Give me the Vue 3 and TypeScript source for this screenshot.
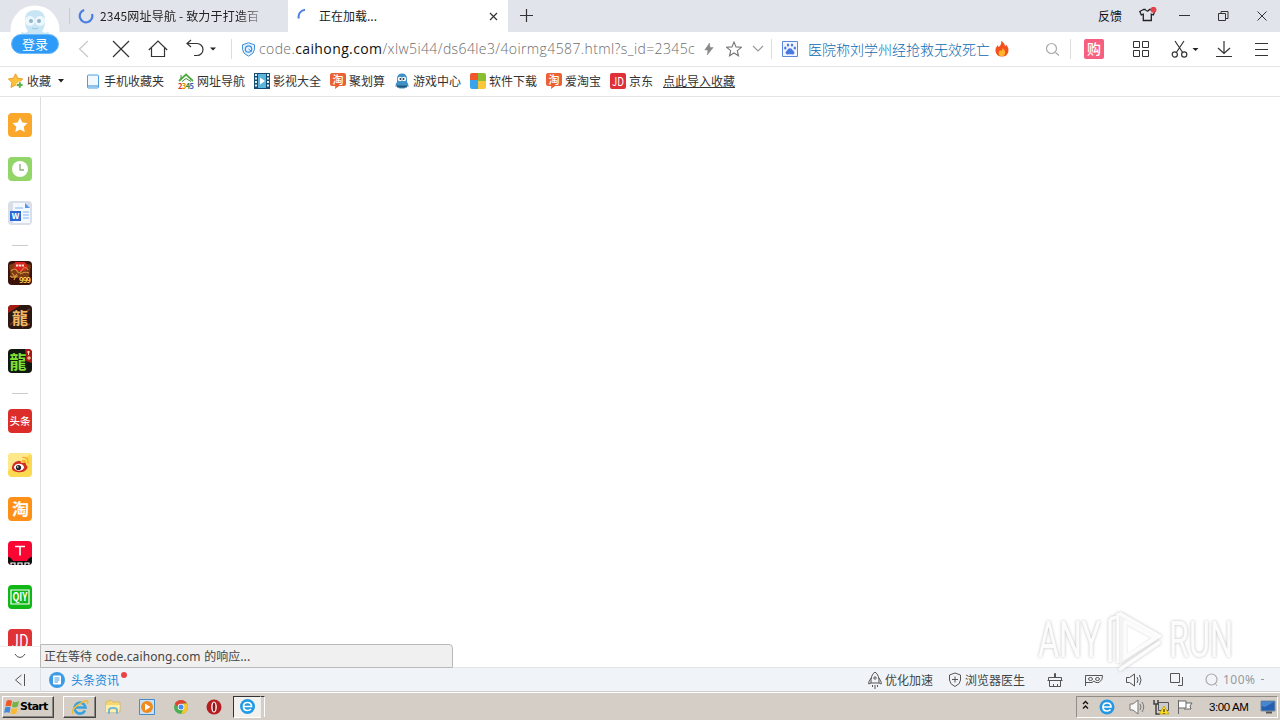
<script setup lang="ts">
interface Bookmark {
  id: string
  label: string
  width: number
}

const bookmarks: Bookmark[] = [
  { id: 'phone', label: '手机收藏夹', width: 93 },
  { id: 'house', label: '网址导航', width: 76 },
  { id: 'film', label: '影视大全', width: 76 },
  { id: 'tao', label: '聚划算', width: 64 },
  { id: 'game', label: '游戏中心', width: 76 },
  { id: 'soft', label: '软件下载', width: 76 },
  { id: 'tao', label: '爱淘宝', width: 64 },
  { id: 'jd', label: '京东', width: 53 },
]

const sideGroups: string[][] = [
  ['star', 'clock', 'word'],
  ['g999', 'dragon1', 'dragon2'],
  ['toutiao', 'weibo', 'taobao', 'tmall', 'qiyi', 'jd'],
]
</script>

<template>
  <div class="screen">
    <header class="tabs">
      <div class="tab idle">
        <svg class="spin" width="16" height="16" viewBox="0 0 16 16"><path d="M6.2 2A6.3 6.3 0 1 0 14 6" fill="none" stroke="#4a7fe0" stroke-width="2.2" /></svg>
        <span class="tab-title faded">2345网址导航 - 致力于打造百</span>
      </div>
      <div class="tab active">
        <svg class="spin" width="16" height="16" viewBox="0 0 16 16"><path d="M1.8 10.5C.8 6 3.400 2.500 8 1.800" fill="none" stroke="#4a7fe0" stroke-width="2" /></svg>
        <span class="tab-title">正在加载...</span>
        <svg class="tab-close" width="9" height="9" viewBox="0 0 9 9"><path d="M1 1l7 7M8 1L1 8" stroke="#333" stroke-width="1.2" /></svg>
      </div>
      <svg class="plus" width="13" height="13" viewBox="0 0 13 13"><path d="M6.500 0v13M0 6.500h13" stroke="#333" stroke-width="1.200" /></svg>
      <div class="window-tools">
        <span class="feedback">反馈</span>
        <svg width="18" height="16" viewBox="0 0 18 16"><path d="M4.500 2.500L.8 4.500l1.500 3.400 2-.7V13.500h8V7.200l2 .7 1.400-3.400-3.400-2H10.500Q8.300 5.500 6.200 2.500z" fill="none" stroke="#222" stroke-width="1.300" /><circle cx="14.500" cy="2.800" r="3" fill="#e6424b" /></svg>
        <svg width="12" height="12" viewBox="0 0 12 12"><path d="M0 5.500h11" stroke="#333" /></svg>
        <svg width="11" height="12" viewBox="0 0 11 12"><path d="M.5 3.500h7v7h-7zM3 3.500v-2h7v7H7.500" fill="none" stroke="#333" /></svg>
        <svg width="10" height="12" viewBox="0 0 10 12"><path d="M.5 1.500l9 9M9.500 1.500l-9 9" stroke="#333" /></svg>
      </div>
    </header>

    <div class="login">
      <svg width="50" height="50" viewBox="0 0 50 50">
        <circle cx="25" cy="26" r="24.500" fill="#fff" />
        <path d="M15 16Q15 6 25 6t10 10q0 8-3 11 1 3 7 1-1 6-7 4v3H18v-3q-6 2-7-4 6 2 7-1-3-3-3-11z" fill="#c7e5f5" />
        <circle cx="20" cy="17" r="5" fill="#eef8fc" /><circle cx="30" cy="17" r="5" fill="#eef8fc" />
        <circle cx="21" cy="17" r="2" fill="#8fb5cb" /><circle cx="29" cy="17" r="2" fill="#8fb5cb" />
        <path d="M22 24q3 2 6 0" stroke="#9cc5da" fill="none" />
      </svg>
      <span>登录</span>
    </div>

    <nav class="navbar">
      <div class="nav-btn"><svg width="20" height="20" viewBox="0 0 20 20"><path d="M14 2L5.500 10l8.500 8" fill="none" stroke="#c8c8c8" stroke-width="1.200" /></svg></div>
      <div class="nav-btn"><svg width="20" height="20" viewBox="0 0 20 20"><path d="M2 2l16 16M18 2L2 18" stroke="#333" stroke-width="1.200" /></svg></div>
      <div class="nav-btn"><svg width="20" height="20" viewBox="0 0 20 20"><path d="M.8 11L10 2l9.200 9M3.500 9v8.500h13V9" fill="none" stroke="#333" stroke-width="1.200" /></svg></div>
      <div class="nav-btn undo"><svg width="32" height="20" viewBox="0 0 32 20"><path d="M5 1L1 4.500 5 8M1.500 4.500H11a6 6 0 0 1 0 12H8" fill="none" stroke="#333" stroke-width="1.200" /><path d="M24 8.500h6l-3 3z" fill="#222" /></svg></div>
      <i class="bar"></i>
      <div class="address">
        <svg width="15" height="15" viewBox="0 0 15 15"><path d="M7.500.8l6 2v4.400q0 4.300-6 7-6-2.700-6-7V2.800z" fill="#e3f1fc" stroke="#3d91dc" /><circle cx="7.500" cy="7" r="3.200" fill="none" stroke="#3d91dc" stroke-width="1.200" /><path d="M7.500 7l3 2.500" stroke="#3d91dc" /></svg>
        <span class="url">code.<b>caihong.com</b>/xlw5i44/ds64le3/4oirmg4587.html?s_id=2345c</span>
        <svg class="bolt" width="10" height="14" viewBox="0 0 10 14"><path d="M5.500 1L.8 8H4l-.8 5L9.200 5.500H6z" fill="#888" stroke="#888" stroke-width=".5" /></svg>
        <svg class="fav" width="16" height="16" viewBox="0 0 16 16"><path d="M8 1l2 4.900 5.300.4-4 3.400 1.200 5.100L8 12l-4.500 2.800 1.200-5.100-4-3.400L6 5.900z" fill="none" stroke="#777" stroke-width="1.100" /></svg>
        <svg class="drop" width="12" height="8" viewBox="0 0 12 8"><path d="M1 1l5 5 5-5" fill="none" stroke="#999" stroke-width="1.200" /></svg>
      </div>
      <i class="bar"></i>
      <div class="search">
        <svg width="16" height="16" viewBox="0 0 16 16"><path d="M.5.500h15v15H.5z" fill="#f1f5fe" stroke="#5e86dc" /><path d="M8 7.300c2 0 2.500 2 4 3.200 1 1.500 0 3-1.700 2.900-1.500-.2-3-.2-4.600 0C4 13.500 3 12 4 10.500 5.500 9.300 6 7.300 8 7.300z" fill="#4b79df" /><g fill="#4b79df"><ellipse cx="3.300" cy="7" rx="1.200" ry="1.500" /><ellipse cx="6" cy="4" rx="1.200" ry="1.600" /><ellipse cx="10" cy="4" rx="1.200" ry="1.600" /><ellipse cx="12.800" cy="7" rx="1.200" ry="1.500" /></g></svg>
        <span class="hot">医院称刘学州经抢救无效死亡</span>
        <svg class="fire" width="14" height="16" viewBox="0 0 14 16"><path d="M6 0q4 2 4 5.500l1.300-1.700Q14 7 13.500 10q-.8 5.500-6.500 5.500T.4 10Q.2 6.500 3 4l.3 2Q7 4 6 0z" fill="#f4511f" /><path d="M7.500 7q3.500 3 2.500 6-1 2.200-3.300 2.200Q3.500 15 3.700 12q.1-2 1.600-3l.7 1.200Q8 9 7.500 7z" fill="#ffb62a" /></svg>
        <svg class="lens" width="15" height="15" viewBox="0 0 15 15"><circle cx="6.500" cy="6.500" r="5" fill="none" stroke="#aaa" stroke-width="1.200" /><path d="M10.500 10.500l3.500 3" stroke="#aaa" stroke-width="1.200" /></svg>
      </div>
      <i class="bar"></i>
      <div class="tools">
        <span class="buy">购</span>
        <svg class="apps" width="18" height="18" viewBox="0 0 18 18"><path d="M1.500 1.500h6v6h-6zM10.500 1.500h6v6h-6zM1.500 10.500h6v6h-6zM10.500 10.500h6v6h-6z" fill="none" stroke="#333" /></svg>
        <svg class="cut" width="28" height="18" viewBox="0 0 28 18"><path d="M4 1l8 12M13 1L5 13" stroke="#333" stroke-width="1.200" /><g fill="none" stroke="#333" stroke-width="1.200"><circle cx="3.800" cy="14.500" r="2.600" /><circle cx="13.200" cy="14.500" r="2.600" /></g><path d="M21.500 8h6l-3 3z" fill="#222" /></svg>
        <svg class="down" width="18" height="18" viewBox="0 0 18 18"><path d="M9 1v12M3 8l6 5.500L15 8M1 16.500h16" fill="none" stroke="#333" stroke-width="1.200" /></svg>
        <svg class="menu" width="14" height="14" viewBox="0 0 14 14"><path d="M0 1.500h13M0 7.500h13M0 13.500h13" stroke="#333" /></svg>
      </div>
    </nav>

    <div class="bookmarks">
      <div class="favorites">
        <svg width="16" height="16" viewBox="0 0 16 16"><path d="M7.500.8l2.200 4.400 5 .7-3.500 3.500.9 5-4.600-2.300-4.500 2.300.9-5L.4 5.900l5-.7z" fill="#fcc13b" stroke="#ed9d29" /><path d="M8.500 12H15M11.800 8.800v6.400" stroke="#fff" stroke-width="3.500" /><path d="M9 12h5.500M11.800 9.300v5.400" stroke="#54b54c" stroke-width="2" /></svg>
        <span>收藏</span>
        <svg class="caret" width="6" height="4" viewBox="0 0 6 4"><path d="M0 0h6L3 3.500z" fill="#222" /></svg>
      </div>
      <div v-for="(item, index) in bookmarks" :key="index" class="bookmark" :style="{ width: item.width + 'px' }">
        <svg width="16" height="16" viewBox="0 0 16 16">
          <g v-if="item.id === 'phone'"><rect x="2.500" y="2" width="11" height="13" rx="1" fill="#f1f9ff" stroke="#4f9dda" /><path d="M3 12h10v2.500H3z" fill="#8dc1eb" /></g>
          <g v-else-if="item.id === 'house'"><path d="M1 8l7-6.500L15 8" fill="none" stroke="#52a942" stroke-width="1.800" /><path d="M3 2v4M4 8.500l4-3 5 3" fill="none" stroke="#3e8f3c" /><text x="0" y="15.500" font-size="7.500" font-weight="700" textLength="16"><tspan fill="#d33">2</tspan><tspan fill="#e58b00">3</tspan><tspan fill="#238b3c">4</tspan><tspan fill="#285ec4">5</tspan></text></g>
          <g v-else-if="item.id === 'film'"><path d="M0 0h16v16H0z" fill="#164c72" /><path d="M4 1h8v14H4z" fill="#59b5dc" /><path d="M2 1v14M14 1v14" stroke="#fff" stroke-width="1.800" stroke-dasharray="2 1.500" /><path d="M6 4.500l5 3.500-5 3.500z" fill="#fff" /></g>
          <g v-else-if="item.id === 'tao'"><path d="M2 0h12q2 0 2 2v9q0 2-2 2H9l-4 3 .3-3H2q-2 0-2-2V2q0-2 2-2z" fill="#eb6136" /><text x="2.500" y="10.700" fill="#fff" font-size="11" font-weight="500">淘</text></g>
          <g v-else-if="item.id === 'game'"><path d="M3 6q0-5.500 5-5.500T13 6v3q2 2 1.500 5l-2-1-2 2.500h-5l-2-2.500-2 1Q1 11 3 9z" fill="#3e91c4" /><circle cx="6" cy="6" r="2.200" fill="#fff" /><circle cx="10" cy="6" r="2.200" fill="#fff" /><circle cx="6.500" cy="6" r="1" fill="#234" /><circle cx="9.500" cy="6" r="1" fill="#234" /><path d="M3 13.500h10" stroke="#275776" stroke-width="2" /></g>
          <g v-else-if="item.id === 'soft'"><rect width="16" height="16" rx="2" fill="#fff" /><path d="M0 2q0-2 2-2h6v7H0z" fill="#f1572c" /><path d="M8 0h6q2 0 2 2v6H8z" fill="#88bf31" /><path d="M0 7h8v9H2q-2 0-2-2z" fill="#39a3eb" /><path d="M8 8h8v6q0 2-2 2H8z" fill="#fbc73a" /></g>
          <g v-else><rect width="16" height="16" rx="2" fill="#df3038" /><text x="2" y="12.500" fill="#fff" font-size="12" textLength="12" lengthAdjust="spacingAndGlyphs">JD</text></g>
        </svg>
        <span>{{ item.label }}</span>
      </div>
      <span class="import">点此导入收藏</span>
    </div>

    <main class="content">
      <aside class="sidebar">
        <div class="side-list">
          <template v-for="(group, g) in sideGroups" :key="g">
            <hr v-if="g > 0">
            <svg v-for="name in group" :key="name" class="side-icon" width="24" height="24" viewBox="0 0 24 24">
              <g v-if="name === 'star'"><path d="M0 0h24v24H0z" fill="#faa72b" /><path d="M12 4.500l2.300 4.900 5.300.7-3.900 3.700 1 5.300-4.700-2.600L7.300 19l1-5.300-3.900-3.600 5.300-.7z" fill="#fff" /></g>
              <g v-else-if="name === 'clock'"><path d="M0 0h24v24H0z" fill="#92d569" /><circle cx="12" cy="12" r="8" fill="#fff" /><path d="M12 7v6h4" fill="none" stroke="#8aae7c" stroke-width="1.300" /></g>
              <g v-else-if="name === 'word'"><path d="M0 0h24v24H0z" fill="#d9dee8" /><path d="M5 2h12l5 5v15H5z" fill="#f4f8ff" /><path d="M17 2v5h5z" fill="#5b93e7" /><path d="M7 7h8M15 11h6M15 14h6M15 17h6" stroke="#a8cafa" stroke-width="1.300" /><path d="M2 10h11v10H2z" fill="#2c68d4" /><text x="3.500" y="18" fill="#fff" font-size="10" font-weight="700" textLength="8" lengthAdjust="spacingAndGlyphs">w</text></g>
              <g v-else-if="name === 'g999'"><path d="M0 0h24v24H0z" fill="#3b1209" /><path d="M1 4q9-5 22 0l-2 13H3z" fill="#7a3b16" /><path d="M7 1h10l3 5-3 4H9L6 7z" fill="#d8231e" /><path d="M8 4.500h8" stroke="#ffe0cc" stroke-width="2" stroke-dasharray="2.300 .6" /><path d="M3 10q4-4 6 0t5-1 6 0M2 15q4 3 7-2M6 19q1-4 4-4M4 12l4 5M12 13q5-3 9-1" fill="none" stroke="#d9933b" stroke-width="1.100" /><text x="11" y="22" fill="#ffd34f" font-size="8" font-weight="700" textLength="12">999</text></g>
              <g v-else-if="name === 'dragon1'"><path d="M0 0h24v24H0z" fill="#2a1712" /><path d="M0 0h13L0 8z" fill="#a31c12" /><path d="M2 20q8-9 20-16M14 22l8-3" stroke="#6f351c" fill="none" stroke-width="1.500" /><text x="4" y="18.500" fill="#f6b764" font-size="16" font-weight="700">龍</text></g>
              <g v-else-if="name === 'dragon2'"><path d="M0 0h24v24H0z" fill="#12170f" /><path d="M17 0h7v14l-6-2z" fill="#a91a19" /><text x="1.500" y="20" fill="#80df32" font-size="18" font-weight="700" textLength="17" lengthAdjust="spacingAndGlyphs">龍</text><path d="M19 3h3M20.500 2v4M19 9h4M21 7v4" stroke="#ffe2bc" /></g>
              <g v-else-if="name === 'toutiao'"><path d="M0 0h24v24H0z" fill="#dc2d2a" /><text x="1.500" y="15.500" fill="#fff" font-size="10.500" font-weight="500" textLength="21">头条</text></g>
              <g v-else-if="name === 'weibo'"><path d="M0 0h24v24H0z" fill="#fbd951" /><path d="M0 0h24L0 18z" fill="#fde98b" /><path d="M14 8q3-1 3 2" stroke="#f19a24" fill="none" stroke-width="1.200" /><path d="M14 4.500q7-1 6 6" stroke="#f4ac33" fill="none" stroke-width="1.200" /><path d="M4 14q1-5 6-6 3-1 3 2 6-1 5 2 3 2 0 5-3 3-9 2-6-1-5-5z" fill="#d42b22" /><ellipse cx="11" cy="14.300" rx="5" ry="3.500" fill="#fff" /><circle cx="10.500" cy="14.500" r="2.600" fill="#252429" /><circle cx="9.800" cy="14" r=".8" fill="#fff" /></g>
              <g v-else-if="name === 'taobao'"><path d="M0 0h24v24H0z" fill="#ff9017" /><text x="4" y="17.500" fill="#fff" font-size="16" font-weight="700" textLength="17" lengthAdjust="spacingAndGlyphs">淘</text></g>
              <g v-else-if="name === 'tmall'"><path d="M0 0h24v24H0z" fill="#fa0632" /><path d="M7 5.500h10M12 5v9.500" stroke="#fff" stroke-width="1.700" /><path d="M0 16q3 0 5 4h14q2-4 5-4v8H0z" fill="#111" /><path d="M3 24v-2h4v2M10 24v-2h4v2M17 24v-2h4v2" fill="none" stroke="#fff" stroke-width="1.200" /></g>
              <g v-else-if="name === 'qiyi'"><path d="M0 0h24v24H0z" fill="#10b717" /><path d="M3 7V5h18v2M3 17v2h18v-2M3 7v10M21 7v10" fill="none" stroke="#fff" stroke-width="1.200" /><text x="4.500" y="16" fill="#fff" font-size="11" font-weight="700" textLength="15" lengthAdjust="spacingAndGlyphs">QIY</text></g>
              <g v-else><path d="M0 0h24v24H0z" fill="#df3338" /><text x="3.500" y="19" fill="#fff" font-size="18" textLength="17" lengthAdjust="spacingAndGlyphs">JD</text></g>
            </svg>
          </template>
        </div>
        <div class="side-more"><svg width="12" height="7" viewBox="0 0 12 7"><path d="M1 1q2 3.500 5 3.500T11 1" fill="none" stroke="#555" /></svg></div>
      </aside>
      <div class="page"></div>
      <div class="loading">正在等待 <span>code.caihong.com</span> 的响应...</div>
    </main>

    <div class="status">
      <div class="collapse"><svg width="12" height="12" viewBox="0 0 12 12"><path d="M7.500 1L1.500 6l6 5M10.500 0v12" fill="none" stroke="#555" /></svg></div>
      <svg class="news-icon" width="16" height="16" viewBox="0 0 16 16"><circle cx="8" cy="8" r="8" fill="#3c9be4" /><rect x="4" y="3.500" width="8" height="9" rx="1" fill="#fff" /><path d="M5.500 6h5M5.500 8h5M5.500 10h3.500" stroke="#3c9be4" /></svg>
      <span class="news">头条资讯</span><i class="red-dot"></i>
      <div class="status-tools">
        <svg class="rocket" width="14" height="18" viewBox="0 0 14 18"><path d="M7 1Q2.500 4 3 12h8Q11.500 4 7 1zM3 7L.8 11v2L3 12M11 7l2.200 4v2L11 12" fill="none" stroke="#555" /><circle cx="7" cy="7" r="1.200" fill="none" stroke="#555" /><path d="M4.500 14v2M7 14v4M9.500 14v2" stroke="#555" /></svg>
        <span>优化加速</span>
        <svg class="doctor" width="14" height="16" viewBox="0 0 14 16"><path d="M7 1l5.500 2v5q0 4-5.500 6.500Q1.500 12 1.500 8V3zM4 7.500h6M7 4.500v6" fill="none" stroke="#555" /></svg>
        <span>浏览器医生</span>
        <svg class="broom" width="16" height="16" viewBox="0 0 16 16"><path d="M7.500 5.500V1.500h1v4M1.500 9V5.500h13V9M.5 8.500h15M2.500 8.500v6h11v-6M6.500 14v-2M10.500 14v-2" fill="none" stroke="#555" /></svg>
        <svg class="mask" width="18" height="12" viewBox="0 0 18 12"><path d="M.5 12V1.500h17Q18 6 14 8.500h-3L9 7 7 8.500H1" fill="none" stroke="#555" /><ellipse cx="5.500" cy="5" rx="2" ry="1.500" fill="none" stroke="#555" /><ellipse cx="12.500" cy="5" rx="2" ry="1.500" fill="none" stroke="#555" /></svg>
        <svg class="sound" width="16" height="14" viewBox="0 0 16 14"><path d="M.5 4.500h3l5-3.500v12l-5-3.500h-3zM11 4q2 3 0 6M13.500 2q3 5 0 10" fill="none" stroke="#555" /></svg>
        <svg class="windows" width="13" height="13" viewBox="0 0 13 13"><path d="M.5.500h9v9h-9zM12.500 4v8.500H8" fill="none" stroke="#555" /></svg>
        <svg class="zoom" width="14" height="14" viewBox="0 0 14 14"><circle cx="6.500" cy="6.500" r="5.500" fill="none" stroke="#aaa" stroke-width="1.200" /><path d="M10 10l2 3" stroke="#aaa" /></svg>
        <span class="percent">100%</span><i class="dash"></i>
      </div>
    </div>

    <footer class="taskbar">
      <div class="start"><svg width="16" height="16" viewBox="0 0 16 16"><path d="M2.500 2Q5 0 8 2L6.800 7.500q-3-1.500-5.300 0z" fill="#ee5529" /><path d="M9 2.500q3 1.500 6-.5L13.800 7.500q-3 1.800-6 .3z" fill="#73b444" /><path d="M1.300 8.500q2.500-1.700 5.300 0L5.400 14Q3 12.500 0 14z" fill="#4089dc" /><path d="M7.500 9q3 1.500 6 0l-1.200 5.500q-3 1.600-6 0z" fill="#f9ba32" /></svg><b>Start</b></div>
      <div class="task ie-one"><svg width="18" height="18" viewBox="0 0 18 18"><path d="M14 12.500A5.500 5.500 0 1 1 14.500 9.500H5" fill="none" stroke="#35a3e1" stroke-width="2.600" /><path d="M2 16Q-1 10 15 2.500q3 0 1 3.500" fill="none" stroke="#f0bb34" stroke-width="1.500" /></svg></div>
      <svg class="explorer" width="16" height="16" viewBox="0 0 16 16"><path d="M1 3l5-2 2 2h7v10H1z" fill="#f5d675" stroke="#cdab4c" stroke-width=".6" /><path d="M1 6h14l-1 7H1z" fill="#fff0a7" /><path d="M4 15v-4q0-2 4-2t4 2v4" fill="none" stroke="#73b7d8" stroke-width="2" /></svg>
      <svg class="wmp" width="16" height="16" viewBox="0 0 16 16"><path d="M.5.500h15v15H.5z" fill="#c7e2f7" stroke="#478cc7" /><circle cx="8" cy="8" r="6" fill="#f18a1c" /><path d="M6 4.500l5.500 3.500L6 11.500z" fill="#fff" /></svg>
      <svg class="chrome" width="14" height="14" viewBox="0 0 14 14"><circle cx="7" cy="7" r="7" fill="#4baf50" /><path d="M1 3.500a7 7 0 0 1 12 0H7L4 8z" fill="#e34133" /><path d="M7 14l3-6-1-4.500h4A7 7 0 0 1 7 14z" fill="#f8c72d" /><circle cx="7" cy="7" r="3.300" fill="#fff" /><circle cx="7" cy="7" r="2.500" fill="#438cf0" /></svg>
      <svg class="opera" width="16" height="16" viewBox="0 0 16 16"><circle cx="8" cy="8" r="7.500" fill="#b51d20" /><ellipse cx="8" cy="8" rx="2.800" ry="5.500" fill="#fff" /><ellipse cx="8" cy="8" rx="1.400" ry="4.500" fill="#8c1518" /></svg>
      <div class="task ie-two"><svg width="15" height="15" viewBox="0 0 15 15"><circle cx="7.500" cy="7.500" r="7.500" fill="#219be7" /><path d="M3.500 7.500h8q0-4-4-4t-4 4 4 4q2.200 0 3.500-1.500" fill="none" stroke="#fff" stroke-width="1.700" /></svg></div>
      <i class="task-end"></i>
      <div class="tray">
        <svg class="more" width="7" height="10" viewBox="0 0 7 10"><path d="M1 4l2.500-2.500L6 4M1 8.500L3.500 6 6 8.500" fill="none" stroke="#111" stroke-width="1.300" /></svg>
        <svg class="tray-ie" width="16" height="16" viewBox="0 0 16 16"><circle cx="8" cy="8" r="7.500" fill="#2498e3" /><path d="M4 8h8q0-4-4-4T4 8t4 4q2.200 0 3.500-1.500" fill="none" stroke="#fff" stroke-width="1.700" /></svg>
        <svg class="tray-sound" width="17" height="16" viewBox="0 0 17 16"><path d="M1 5h3l5-4v14l-5-4H1z" fill="#f8f8f8" stroke="#777" /><path d="M11 5q2 3 0 6M13 3q3.500 5 0 10" fill="none" stroke="#777" /></svg>
        <svg class="net" width="17" height="16" viewBox="0 0 17 16"><path d="M5.500 3.500h10v8h-10z" fill="#ccc" stroke="#555" /><path d="M1 1v4h4V1M3 5v10h4" fill="none" stroke="#444" stroke-width="1.500" /><path d="M11 7l5 8H6z" fill="#ffdf22" stroke="#b79400" stroke-width=".7" /><path d="M11 10v3M11 14v1" stroke="#333" stroke-width="1.200" /></svg>
        <svg class="flag" width="16" height="16" viewBox="0 0 16 16"><path d="M1.500 15V1M2 2h7v7H2M9 4h6l-2 3 1 3H7" fill="#fff" stroke="#666" /></svg>
        <span>3:00 AM</span>
        <svg class="desktop" width="16" height="14" viewBox="0 0 16 14"><path d="M1 1h14v10H1z" fill="#245fb1" stroke="#76909f" /><path d="M1.500 1.500h13L5 7 1.500 6z" fill="#4a86cd" /><path d="M6 12.500h6" stroke="#555" stroke-width="2" /></svg>
      </div>
    </footer>

    <svg class="watermark" width="204" height="74" viewBox="0 0 204 74">
      <g fill="#fcfcfc" font-size="50">
        <text x="4" y="53" textLength="63" lengthAdjust="spacingAndGlyphs">ANY</text>
        <text x="135" y="53" textLength="64" lengthAdjust="spacingAndGlyphs">RUN</text>
      </g>
      <path d="M86 8L128 32 86 60z" fill="#f1f1f1" />
      <path d="M94 23l21 11-21 15z" fill="#fff" />
      <path d="M84 9v50M85 9l42 24M91 17v36l34-21M91 17l32 18M76 15v43M76 15l7-2M85 66l41-28" fill="none" stroke="#fcfcfc" stroke-width="3.500" />
    </svg>
  </div>
</template>

<style>
html, body { margin: 0; overflow: hidden; }
</style>

<style scoped>
.screen { position: relative; width: 1280px; height: 720px; overflow: hidden; display: flex; flex-direction: column; background: #fff; color: #333; font: 12px/16px "Noto Sans CJK SC", sans-serif; }
svg { display: block; flex: none; }
i { display: block; flex: none; }
span { white-space: nowrap; }
.tabs { height: 32px; flex: none; display: flex; align-items: center; background: #e1e4eb; color: #222; }
.tab { display: flex; align-items: center; height: 32px; box-sizing: border-box; }
.idle { width: 219px; margin-left: 69px; padding-left: 9px; position: relative; }
.idle::before { content: ""; position: absolute; left: 0; top: 8px; width: 1px; height: 16px; background: #c9ccd3; }
.active { width: 220px; background: #fff; padding-left: 9px; }
.spin { margin-right: 6px; }
.tab-title { height: 16px; }
.faded { width: 160px; overflow: hidden; letter-spacing: .18px; mask-image: linear-gradient(90deg, #000 140px, transparent 170px); }
.tab-close { margin-left: auto; margin-right: 10px; }
.plus { margin-left: 12px; margin-bottom: 2px; }
.window-tools { margin-left: auto; display: flex; align-items: center; padding-right: 13px; }
.feedback { margin-right: 17px; color: #111; }
.window-tools svg:nth-of-type(1) { margin-right: 22px; margin-bottom: 2px; }
.window-tools svg:nth-of-type(2) { margin-right: 27px; }
.window-tools svg:nth-of-type(3) { margin-right: 28px; }
.window-tools svg:nth-of-type(n+2) { margin-bottom: 1px; }
.login { position: absolute; z-index: 3; left: 10px; top: 4px; width: 50px; height: 50px; display: flex; justify-content: center; align-items: flex-end; }
.login svg { position: absolute; left: 0; top: 0; }
.login span { position: relative; width: 46px; height: 18px; line-height: 17px; border: 1px solid #72baf7; border-radius: 10px; background: #2d9bf7; color: #fff; text-align: center; font-size: 13px; }
.navbar { height: 34px; flex: none; border-bottom: 1px solid #e5e5e5; display: flex; align-items: center; padding-left: 65px; }
.nav-btn { width: 37px; display: flex; justify-content: center; }
.undo { width: 55px; justify-content: flex-start; box-sizing: border-box; padding-left: 10px; }
.bar { width: 1px; height: 20px; background: #ddd; }
.address { width: 539px; display: flex; align-items: center; box-sizing: border-box; padding-left: 9px; }
.url { width: 437px; margin-left: 3px; overflow: hidden; font: 300 14px/20px "Open Sans", sans-serif; color: #6c6c6c; letter-spacing: .39px; }
.url b { color: #111; font-weight: 400; }
.bolt { margin-left: 8px; }
.fav { margin-left: 12px; }
.drop { margin-left: 10px; }
.search { width: 298px; box-sizing: border-box; padding-left: 10px; display: flex; align-items: center; }
.hot { margin-left: 10px; width: 182px; color: #0d68b0; font-size: 14px; line-height: 20px; font-weight: 300; margin-bottom: 1px; }
.fire { margin-left: 5px; }
.lens { margin-left: 36px; }
.tools { display: flex; align-items: center; padding-left: 13px; }
.buy { width: 20px; height: 20px; border-radius: 2px; background: #f65f7f; color: #fff; font-size: 14px; font-weight: 500; line-height: 19px; text-align: center; }
.apps { margin-left: 28px; }
.cut { margin-left: 21px; }
.down { margin-left: 16px; }
.menu { margin-left: 22px; }
.bookmarks { height: 29px; flex: none; border-bottom: 1px solid #e4e4e4; display: flex; align-items: center; }
.bookmarks span { margin-bottom: 1px; }
.bookmarks svg { margin-bottom: 1px; }
.favorites { width: 85px; padding-left: 8px; box-sizing: border-box; display: flex; align-items: center; }
.favorites span { margin-left: 3px; }
.caret { margin-left: 7px; }
.bookmark { display: flex; align-items: center; gap: 3px; }
.bookmark text { font-family: "Noto Sans CJK SC", sans-serif; }
.import { text-decoration: underline; }
.content { position: relative; height: 570px; flex: none; display: flex; }
.sidebar { width: 40px; border-right: 1px solid #dedede; display: flex; flex-direction: column; }
.side-list { height: 549px; overflow: hidden; display: flex; flex-direction: column; align-items: center; gap: 20px; box-sizing: border-box; padding-top: 16px; }
.side-icon { border-radius: 4px; overflow: hidden; }
.sidebar hr { flex: none; width: 16px; height: 1px; margin: 0; border: 0; background: #ccc; margin-bottom: -5px; }
.side-more { height: 20px; border-top: 1px solid #eee; display: flex; align-items: center; justify-content: center; }
.side-more svg { margin-bottom: 1px; }
.page { flex: 1; }
.loading { position: absolute; z-index: 2; left: 40px; bottom: -1px; width: 413px; height: 24px; box-sizing: border-box; padding-left: 3px; background: #f0f0f0; border: 1px solid #b9b9b9; border-top-right-radius: 4px; font-size: 12px; line-height: 22px; color: #444; word-spacing: 1px; }
.loading span { font: 12px/20px "Noto Sans", sans-serif; letter-spacing: .12px; }
.status { height: 25px; flex: none; background: #f0f4f8; display: flex; align-items: center; border-top: 1px solid #e1e5e8; box-sizing: border-box; border-bottom: 1px solid #d0cfcc; color: #444; }
.collapse { width: 40px; display: flex; justify-content: center; border-right: 1px solid #dce0e3; height: 24px; align-items: center; }
.news-icon { margin-left: 8px; }
.news { margin-left: 6px; color: #1686d8; }
.red-dot { width: 6px; height: 6px; margin: -10px 0 0 2px; border-radius: 50%; background: #e94249; }
.status-tools { margin-left: auto; padding-right: 16px; display: flex; align-items: center; }
.rocket { margin-right: 3px; }
.doctor { margin-left: 15px; margin-right: 3px; }
.broom { margin-left: 22px; }
.mask { margin-left: 22px; }
.sound { margin-left: 23px; }
.windows { margin-left: 28px; }
.zoom { margin-left: 22px; }
.percent { margin-left: 4px; width: 34px; color: #999; font: 12px/16px "Noto Sans", sans-serif; letter-spacing: .5px; }
.dash { margin-left: 4px; width: 3px; height: 1px; background: #999; }
.taskbar { height: 28px; flex: none; box-sizing: border-box; padding-bottom: 0; border-top: 1px solid #fff; background: #d5cec7; display: flex; align-items: center; font-family: "DejaVu Sans", sans-serif; color: #000; }
.start { margin-left: 2px; width: 52px; height: 22px; box-sizing: border-box; border: 1px solid; border-color: #fff #444 #444 #fff; box-shadow: inset -1px -1px #898580; display: flex; align-items: center; padding-left: 1px; }
.start b { font: 700 11px/16px "DejaVu Sans", sans-serif; letter-spacing: -.75px; }
.task { height: 22px; box-sizing: border-box; display: flex; align-items: center; justify-content: center; }
.ie-one { margin-left: 9px; width: 33px; border: 1px solid; border-color: #fff #444 #444 #fff; box-shadow: inset -1px -1px #898580; }
.explorer { margin-left: 9px; }
.wmp { margin-left: 18px; }
.chrome { margin-left: 19px; }
.opera { margin-left: 18px; }
.ie-two { margin-left: 11px; width: 28px; background: #f3f1ee; border: 1px solid; border-color: #333 #eee #fff #333; }
.task-end { width: 3px; height: 20px; border-top: 1px solid #333; border-right: 1px solid #fff; }
.tray { margin-left: auto; margin-right: 2px; width: 202px; height: 22px; box-sizing: border-box; border: 1px solid; border-color: #918c85 #fff #fff #918c85; display: flex; align-items: center; padding-left: 5px; }
.more { margin-bottom: 3px; }
.tray-ie { margin-left: 10px; }
.tray-sound { margin-left: 14px; }
.net { margin-left: 7px; }
.flag { margin-left: 7px; }
.tray span { margin-left: 16px; width: 43px; font: 11.5px/16px "Liberation Sans", sans-serif; letter-spacing: -.4px; }
.desktop { margin-left: 8px; }
.watermark { position: absolute; z-index: 4; left: 1034px; top: 604px; font-family: Roboto, sans-serif; filter: drop-shadow(0 0 1.500px #b5b5b5); opacity: .85; }
</style>
